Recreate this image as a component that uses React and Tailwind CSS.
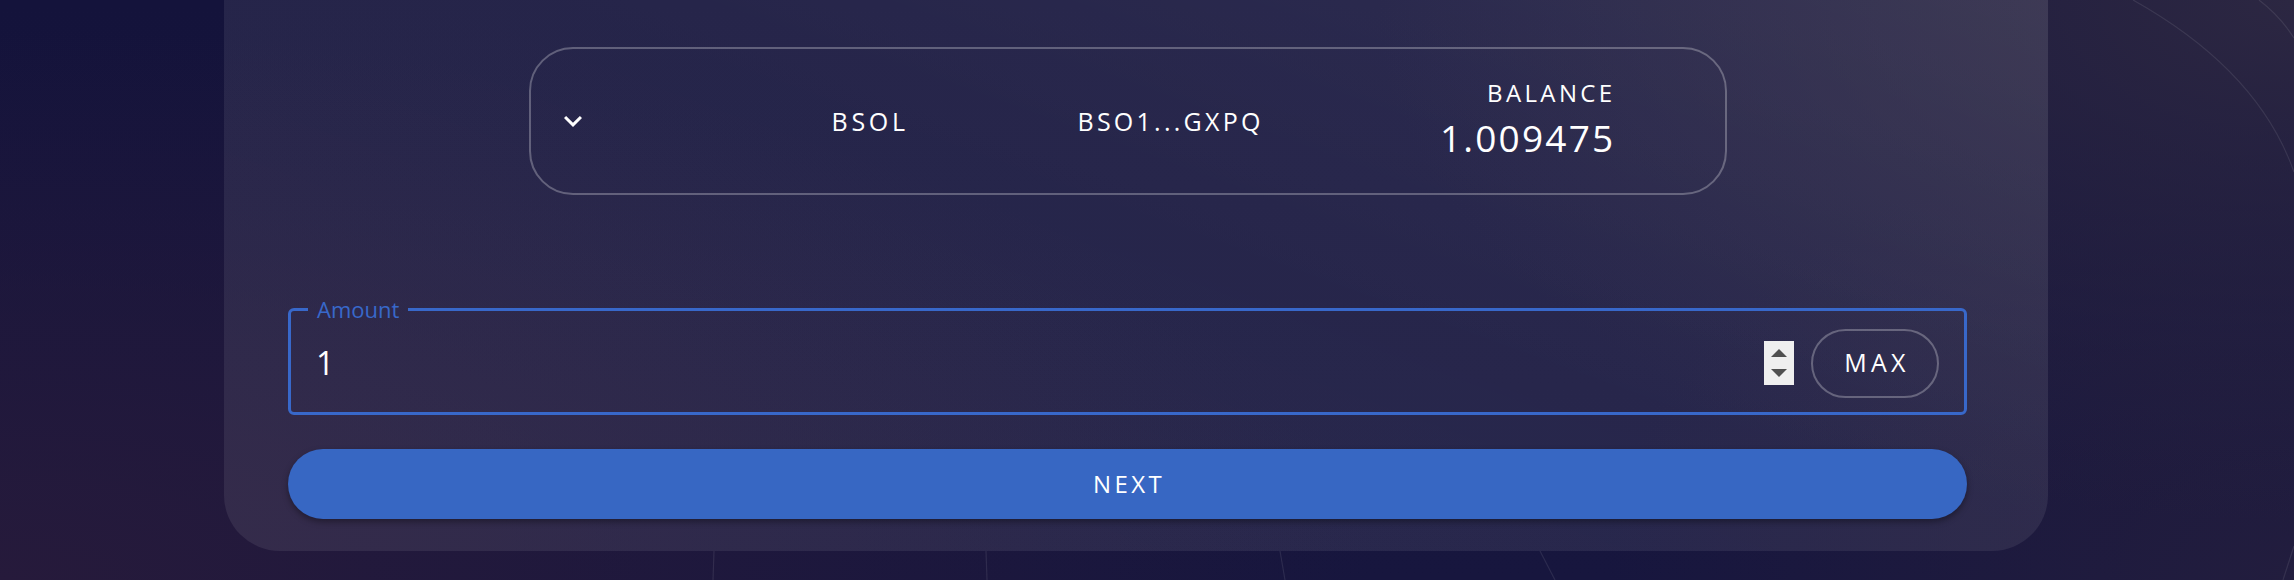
import React from "react";

const ChevronDown = () => (
  <svg viewBox="0 0 24 24" className="w-[36px] h-[36px] fill-white">
    <path d="M16.59 8.59 12 13.17 7.41 8.59 6 10l6 6 6-6z" />
  </svg>
);

const Spinner = () => (
  <div className="w-[30px] h-[44px] bg-[#efefef] flex flex-col items-center justify-between py-[8px]">
    <svg width="16" height="8" viewBox="0 0 16 8">
      <path d="M8 0 16 8H0z" fill="#505050" />
    </svg>
    <svg width="16" height="8" viewBox="0 0 16 8">
      <path d="M0 0h16L8 8z" fill="#505050" />
    </svg>
  </div>
);

const Backdrop = () => (
  <svg className="absolute inset-0 w-full h-full" viewBox="0 0 2294 580" fill="none">
    <g stroke="rgba(255,255,255,0.09)" strokeWidth="1.2">
      <path d="M2133 0 Q2258 70 2294 172" />
      <path d="M2259 0 Q2280 16 2294 38" />
      <path d="M2283 580 L2294 546" />
      <path d="M714 551 L713 580" />
      <path d="M986 551 L987 580" />
      <path d="M1280 551 L1285 580" />
      <path d="M1540 551 L1555 580" />
    </g>
  </svg>
);

export default function App() {
  return (
    <div className="relative h-[580px] w-full overflow-hidden font-['Open_Sans',sans-serif] text-white bg-[radial-gradient(ellipse_60%_95%_at_0%_100%,#261a3b_0%,rgba(38,26,59,0)_100%),radial-gradient(ellipse_40%_90%_at_100%_0%,#2c2742_0%,rgba(44,39,66,0)_100%),radial-gradient(ellipse_30%_80%_at_100%_100%,#221d3e_0%,rgba(34,29,62,0)_100%),linear-gradient(180deg,#14133b_0%,#17163e_100%)]">
      <Backdrop />

      <div className="relative ml-[224px] w-[1824px] h-[551px] rounded-b-[56px] bg-[linear-gradient(200deg,rgba(255,255,255,0.11)_0%,rgba(255,255,255,0.075)_45%,rgba(255,255,255,0.08)_100%)] pl-[64px] pr-[81px] pt-[47px] flex flex-col">
        {/* token picker */}
        <div className="mx-auto w-[1198px] h-[148px] shrink-0 rounded-[44px] border-2 border-white/[0.27] flex items-center">
          <div className="w-[84px] flex justify-center">
            <ChevronDown />
          </div>
          <div className="ml-[217px] w-[246px] text-[25px] leading-none tracking-[0.15em]">BSOL</div>
          <div className="text-[25px] leading-none tracking-[0.13em]">BSO1...GXPQ</div>
          <div className="ml-auto mr-[109px] mb-[5px] flex flex-col items-end">
            <div className="text-[24px] leading-none tracking-[0.14em]">BALANCE</div>
            <div className="mt-[14px] text-[37px] leading-none tracking-[0.06em]">1.009475</div>
          </div>
        </div>

        {/* amount field */}
        <fieldset className="mt-[103px] min-w-0 w-full rounded-[6px] border-[3px] border-[#3868ca]">
          <legend className="ml-[17px] px-[9px] text-[22px] leading-[22px] text-[#3868ca]">Amount</legend>
          <div className="h-[92px] pb-[6px] flex items-center pl-[25px] pr-[25px]">
            <div className="text-[32px] leading-none">1</div>
            <div className="ml-auto">
              <Spinner />
            </div>
            <button className="ml-[17px] w-[128px] h-[69px] rounded-full border-2 border-white/[0.27] text-[25px] font-medium tracking-[0.17em] pl-[4px]">
              MAX
            </button>
          </div>
        </fieldset>

        <button className="mt-[34px] h-[70px] w-full shrink-0 rounded-full bg-[#3767c3] shadow-[0_3px_6px_rgba(0,0,0,0.35)] text-[24px] font-medium tracking-[0.14em] pl-[3px]">
          NEXT
        </button>
      </div>
    </div>
  );
}
